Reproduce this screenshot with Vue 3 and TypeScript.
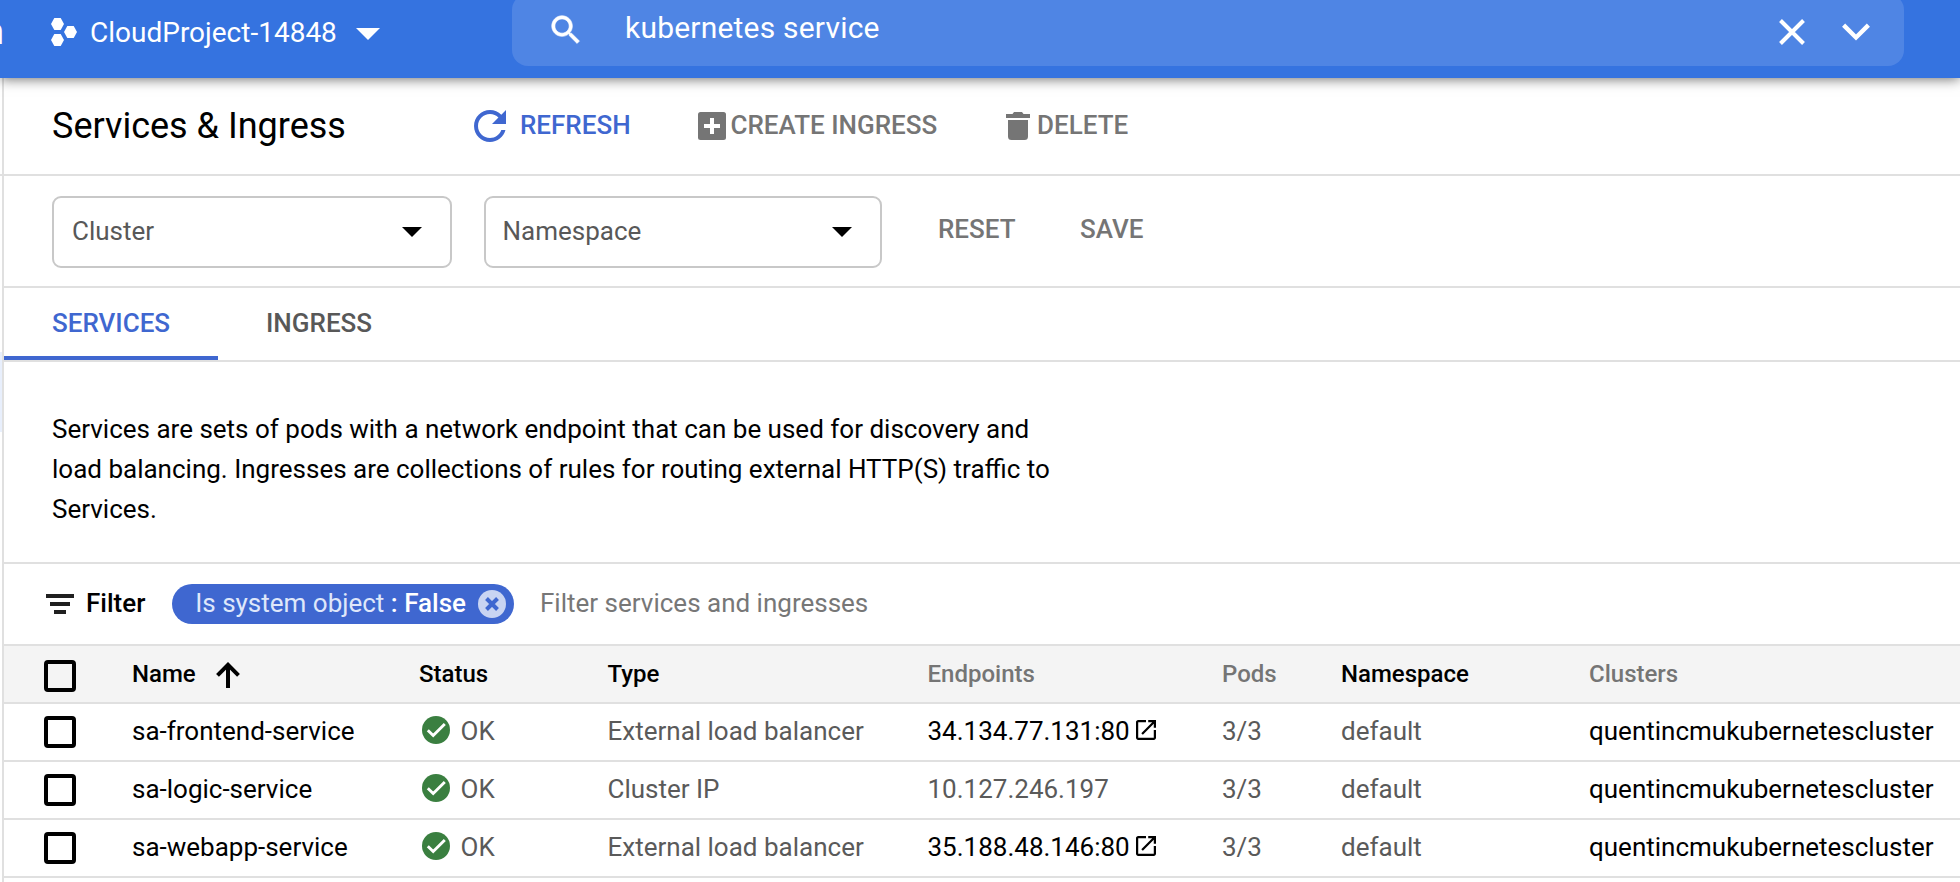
<script setup lang="ts">
interface Column {
  key: string
  label: string
  sortable: boolean
  sorted?: boolean
}

interface Service {
  name: string
  status: string
  type: string
  endpoint: string
  external: boolean
  pods: string
  namespace: string
  cluster: string
}

const columns: Column[] = [
  { key: 'name', label: 'Name', sortable: true, sorted: true },
  { key: 'status', label: 'Status', sortable: true },
  { key: 'type', label: 'Type', sortable: true },
  { key: 'endpoints', label: 'Endpoints', sortable: false },
  { key: 'pods', label: 'Pods', sortable: false },
  { key: 'namespace', label: 'Namespace', sortable: true },
  { key: 'clusters', label: 'Clusters', sortable: false },
]

const services: Service[] = [
  { name: 'sa-frontend-service', status: 'OK', type: 'External load balancer', endpoint: '34.134.77.131:80', external: true, pods: '3/3', namespace: 'default', cluster: 'quentincmukubernetescluster' },
  { name: 'sa-logic-service', status: 'OK', type: 'Cluster IP', endpoint: '10.127.246.197', external: false, pods: '3/3', namespace: 'default', cluster: 'quentincmukubernetescluster' },
  { name: 'sa-webapp-service', status: 'OK', type: 'External load balancer', endpoint: '35.188.48.146:80', external: true, pods: '3/3', namespace: 'default', cluster: 'quentincmukubernetescluster' },
]
</script>

<template>
  <div class="app">
    <header class="topbar">
      <div class="brand">m</div>
      <div class="project">
        <svg class="hexes" width="26" height="28" viewBox="0 0 26 28" fill="#fff">
          <path d="M0 6 3.3 0h6.4L13 6l-3.3 6H3.3z" />
          <path d="M13 14l3.3-6h6.4l3.3 6-3.3 6h-6.4z" />
          <path d="M0 22l3.3-6h6.4l3.3 6-3.3 6H3.3z" />
        </svg>
        <span class="project-name">CloudProject-14848</span>
        <svg class="project-caret" width="24" height="12" viewBox="0 0 24 12" fill="#fff"><path d="M0 0h24L12 12z" /></svg>
      </div>
      <div class="search">
        <svg class="lens" width="38" height="38" viewBox="0 0 24 24" fill="#fff" stroke="#fff" stroke-width="0.4">
          <path d="M15.5 14h-.79l-.28-.27C15.41 12.59 16 11.11 16 9.5 16 5.91 13.09 3 9.5 3S3 5.91 3 9.5 5.91 16 9.5 16c1.61 0 3.09-.59 4.23-1.57l.27.28v.79l5 4.99L20.49 19l-4.99-5zm-6 0C7.01 14 5 11.99 5 9.5S7.01 5 9.5 5 14 7.01 14 9.5 11.99 14 9.5 14z" />
        </svg>
        <span class="query">kubernetes service</span>
        <svg class="clear" width="26" height="26" viewBox="0 0 26 26" fill="none" stroke="#fff" stroke-width="4"><path d="M1.5 1.5l23 23M24.5 1.5l-23 23" /></svg>
        <svg width="28" height="18" viewBox="0 0 28 18" fill="none" stroke="#fff" stroke-width="4.4"><path d="M1.6 2.1 14 14.5 26.4 2.1" /></svg>
      </div>
    </header>

    <div class="body">
      <aside class="rail">
        <div class="rail-head"></div>
        <div class="rail-active"></div>
      </aside>

      <main class="content">
        <div class="toolbar">
          <h1>Services &amp; Ingress</h1>
          <div class="action primary refresh">
            <svg width="32" height="32" viewBox="4 4 16 16" fill="currentColor">
              <path d="M17.65 6.35C16.2 4.9 14.21 4 12 4c-4.42 0-7.99 3.58-7.99 8s3.57 8 7.99 8c3.73 0 6.84-2.55 7.73-6h-2.08c-.82 2.33-3.04 4-5.65 4-3.31 0-6-2.69-6-6s2.69-6 6-6c1.66 0 3.14.69 4.22 1.78L13 11h7V4l-2.35 2.35z" />
            </svg>
            <span>REFRESH</span>
          </div>
          <div class="action create">
            <svg width="28" height="28" viewBox="0 0 28 28">
              <rect width="28" height="28" rx="2.5" fill="currentColor" />
              <path d="M14 6v16M6 14h16" stroke="#fff" stroke-width="4" />
            </svg>
            <span>CREATE INGRESS</span>
          </div>
          <div class="action delete">
            <svg width="24" height="28" viewBox="0 0 24 28" fill="currentColor">
              <path d="M0 2h6.5L8 0h8l1.5 2H24v4H0zM2 8h20v16.5q0 3.5-3.5 3.5h-13Q2 28 2 24.5z" />
            </svg>
            <span>DELETE</span>
          </div>
        </div>

        <div class="selectors">
          <div class="select cluster">
            <span>Cluster</span>
            <svg width="20" height="10" viewBox="0 0 20 10"><path d="M0 0h20L10 10z" /></svg>
          </div>
          <div class="select namespace">
            <span>Namespace</span>
            <svg width="20" height="10" viewBox="0 0 20 10"><path d="M0 0h20L10 10z" /></svg>
          </div>
          <span class="text-button reset">RESET</span>
          <span class="text-button save">SAVE</span>
        </div>

        <nav class="tabs">
          <div class="tab active">SERVICES</div>
          <div class="tab">INGRESS</div>
        </nav>

        <section class="intro">
          <p>Services are sets of pods with a network endpoint that can be used for discovery and load balancing. Ingresses are collections of rules for routing external HTTP(S) traffic to Services.</p>
        </section>

        <div class="filterbar">
          <svg width="28" height="20" viewBox="0 0 28 20" fill="#202020"><path d="M0 0h28v4H0zM4 8h20v4H4zM8 16h12v4H8z" /></svg>
          <span class="filter-label">Filter</span>
          <div class="chip">
            <span class="chip-text"><span class="chip-key">Is system object</span> <b>: False</b></span>
            <svg width="28" height="28" viewBox="0 0 28 28">
              <circle cx="14" cy="14" r="14" fill="#c9d4f2" />
              <path d="M8.5 8.5l11 11M19.5 8.5l-11 11" stroke="#3f67d0" stroke-width="4" />
            </svg>
          </div>
          <span class="placeholder">Filter services and ingresses</span>
        </div>

        <div class="table">
          <div class="row head">
            <div class="cell"><span class="checkbox"></span></div>
            <div v-for="col in columns" :key="col.key" class="cell" :class="{ muted: !col.sortable }">
              <span>{{ col.label }}</span>
              <svg v-if="col.sorted" class="sort" width="24" height="26" viewBox="0 0 24 26" fill="none" stroke="#000" stroke-width="4">
                <path d="M12 26V3M1.5 13.3 12 2.8l10.5 10.5" />
              </svg>
            </div>
          </div>
          <div v-for="s in services" :key="s.name" class="row">
            <div class="cell"><span class="checkbox"></span></div>
            <div class="cell text dark">{{ s.name }}</div>
            <div class="cell text status">
              <svg width="28" height="28" viewBox="0 0 28 28">
                <circle cx="14" cy="14" r="14" fill="#3a7f40" />
                <path d="M5.8 14.2l5.4 5.3L22.8 8" fill="none" stroke="#fff" stroke-width="2.9" />
              </svg>
              <span>{{ s.status }}</span>
            </div>
            <div class="cell text">{{ s.type }}</div>
            <div class="cell text" :class="{ dark: s.external }">
              <span>{{ s.endpoint }}</span>
              <svg v-if="s.external" class="launch" width="20" height="20" viewBox="3 3 18 18">
                <path d="M19 19H5V5h7V3H5c-1.11 0-2 .9-2 2v14c0 1.1.89 2 2 2h14c1.1 0 2-.9 2-2v-7h-2v7zM14 3v2h3.59l-9.83 9.83 1.41 1.41L19 6.41V10h2V3h-7z" />
              </svg>
            </div>
            <div class="cell text">{{ s.pods }}</div>
            <div class="cell text">{{ s.namespace }}</div>
            <div class="cell text dark">{{ s.cluster }}</div>
          </div>
        </div>
      </main>
    </div>
  </div>
</template>

<style>
body {
  margin: 0;
  background: #fff;
}
</style>

<style scoped>
.app {
  box-sizing: border-box;
  width: 1960px;
  height: 882px;
  overflow: hidden;
  display: flex;
  flex-direction: column;
  background: #fff;
  color: #000;
  font-family: Roboto, "Liberation Sans", sans-serif;
  font-size: 26px;
  line-height: 40px;
  white-space: nowrap;
}

.app * {
  box-sizing: border-box;
}

svg {
  display: block;
  flex: none;
}

.topbar {
  position: relative;
  z-index: 1;
  flex: none;
  display: flex;
  height: 78px;
  background: #3573e0;
  color: #fff;
  box-shadow: 0 1px 12px rgba(0, 0, 0, 0.58);
}

/* The product name is scrolled off to the left; only its last stem shows. */
.brand {
  display: flex;
  justify-content: flex-end;
  width: 4px;
  height: 64px;
  margin-right: 47px;
  overflow: hidden;
  font-size: 36px;
  line-height: 64px;
}

.project {
  display: flex;
  align-items: center;
  width: 461px;
  height: 64px;
  font-size: 28px;
}

.project-name {
  margin-left: 13px;
  padding-top: 2px;
}

.project-caret {
  margin: 4px 0 0 19.5px;
}

.search {
  display: flex;
  align-items: center;
  width: 1392px;
  height: 72px;
  margin-top: -6px;
  padding: 0 34px 0 35px;
  border-radius: 16px;
  background: #4f85e4;
}

.query {
  flex: 1;
  margin-left: 40px;
  padding-bottom: 4px;
  font-size: 30px;
  letter-spacing: 0.2px;
}

.clear {
  margin-right: 37px;
}

.search svg {
  margin-top: 4px;
}

.search .lens {
  margin-top: 0;
}

.body {
  flex: 1;
  display: flex;
  min-height: 0;
}

.rail {
  flex: none;
  width: 4px;
  border-right: 2px solid #e0e0e0;
}

.rail-head {
  height: 98px;
  border-bottom: 2px solid #e0e0e0;
}

.rail-active {
  height: 80px;
  margin-top: 176px;
  background: #e8effc;
}

.content {
  flex: 1;
  min-width: 0;
}

.toolbar {
  display: flex;
  align-items: center;
  height: 98px;
  padding-left: 48px;
  border-bottom: 2px solid #e0e0e0;
}

h1 {
  width: 422px;
  margin: 0;
  font-size: 36px;
  font-weight: 400;
}

.action {
  display: flex;
  align-items: center;
  color: #757575;
  font-weight: 500;
}

.action span {
  padding-bottom: 2px;
}

.primary {
  color: #3f67d0;
}

.refresh {
  gap: 14px;
  width: 224px;
}

.create {
  gap: 4.5px;
  width: 308px;
}

.delete {
  gap: 7px;
}

.selectors {
  display: flex;
  align-items: center;
  height: 112px;
  padding: 2px 0 0 48px;
  border-bottom: 2px solid #e0e0e0;
}

.select {
  display: flex;
  align-items: center;
  justify-content: space-between;
  width: 398px;
  height: 72px;
  padding: 0 28px 0 16.5px;
  border: 2px solid #c8c8c8;
  border-radius: 9px;
  color: #585858;
}

.select.cluster {
  width: 400px;
  margin-right: 32px;
  padding-left: 18px;
}

.select span {
  padding-bottom: 2px;
}

.namespace {
  margin-right: 56px;
}

.text-button {
  padding-bottom: 6px;
  color: #757575;
  font-weight: 500;
}

.reset {
  width: 142px;
}

.tabs {
  display: flex;
  height: 74px;
  border-bottom: 2px solid #e0e0e0;
}

.tab {
  height: 72px;
  padding: 0 48px;
  color: #585858;
  font-weight: 500;
  line-height: 70px;
}

.tab.active {
  width: 214px;
  border-bottom: 4px solid #3f67d0;
  color: #3f67d0;
}

.intro {
  height: 202px;
  padding: 47px 48px 0;
  border-bottom: 2px solid #e0e0e0;
}

.intro p {
  width: 1010px;
  margin: 0;
  white-space: normal;
}

.filterbar {
  display: flex;
  align-items: center;
  height: 80px;
  padding-left: 42px;
}

.filter-label {
  width: 86px;
  margin-left: 12px;
  padding-bottom: 2px;
  font-weight: 500;
}

.chip {
  display: flex;
  align-items: center;
  justify-content: space-between;
  width: 342px;
  height: 40px;
  margin-right: 26px;
  padding: 0 8px 0 23.2px;
  border-radius: 20px;
  background: #3f67d0;
  color: #fff;
}

.chip-text {
  padding-bottom: 2px;
}

.chip-key {
  color: #dfe7fa;
}

.chip b {
  font-weight: 500;
}

.placeholder {
  padding-bottom: 2px;
  color: #777;
}

.row {
  display: grid;
  grid-template-columns: 88px 287px 188.5px 320px 294.5px 119px 248px 1fr;
  height: 58px;
  padding-left: 40px;
  border-bottom: 2px solid #e0e0e0;
}

.row.head {
  height: 60px;
  border-top: 2px solid #e0e0e0;
  background: #f4f4f4;
  font-size: 24px;
  font-weight: 500;
}

.cell {
  display: flex;
  align-items: center;
  height: 56px;
}

.muted {
  color: #757575;
}

.text {
  padding-bottom: 2px;
  color: #5a5a5a;
}

.dark {
  color: #000;
}

.checkbox {
  width: 32px;
  height: 32px;
  border: 4px solid #000;
  border-radius: 4px;
}

.head .checkbox {
  margin-top: 4px;
}

.sort {
  margin: 2px 0 0 20px;
}

.status svg {
  margin: -2px 10.5px 0 3px;
}

.launch {
  margin: -2px 0 0 6.5px;
}
</style>
